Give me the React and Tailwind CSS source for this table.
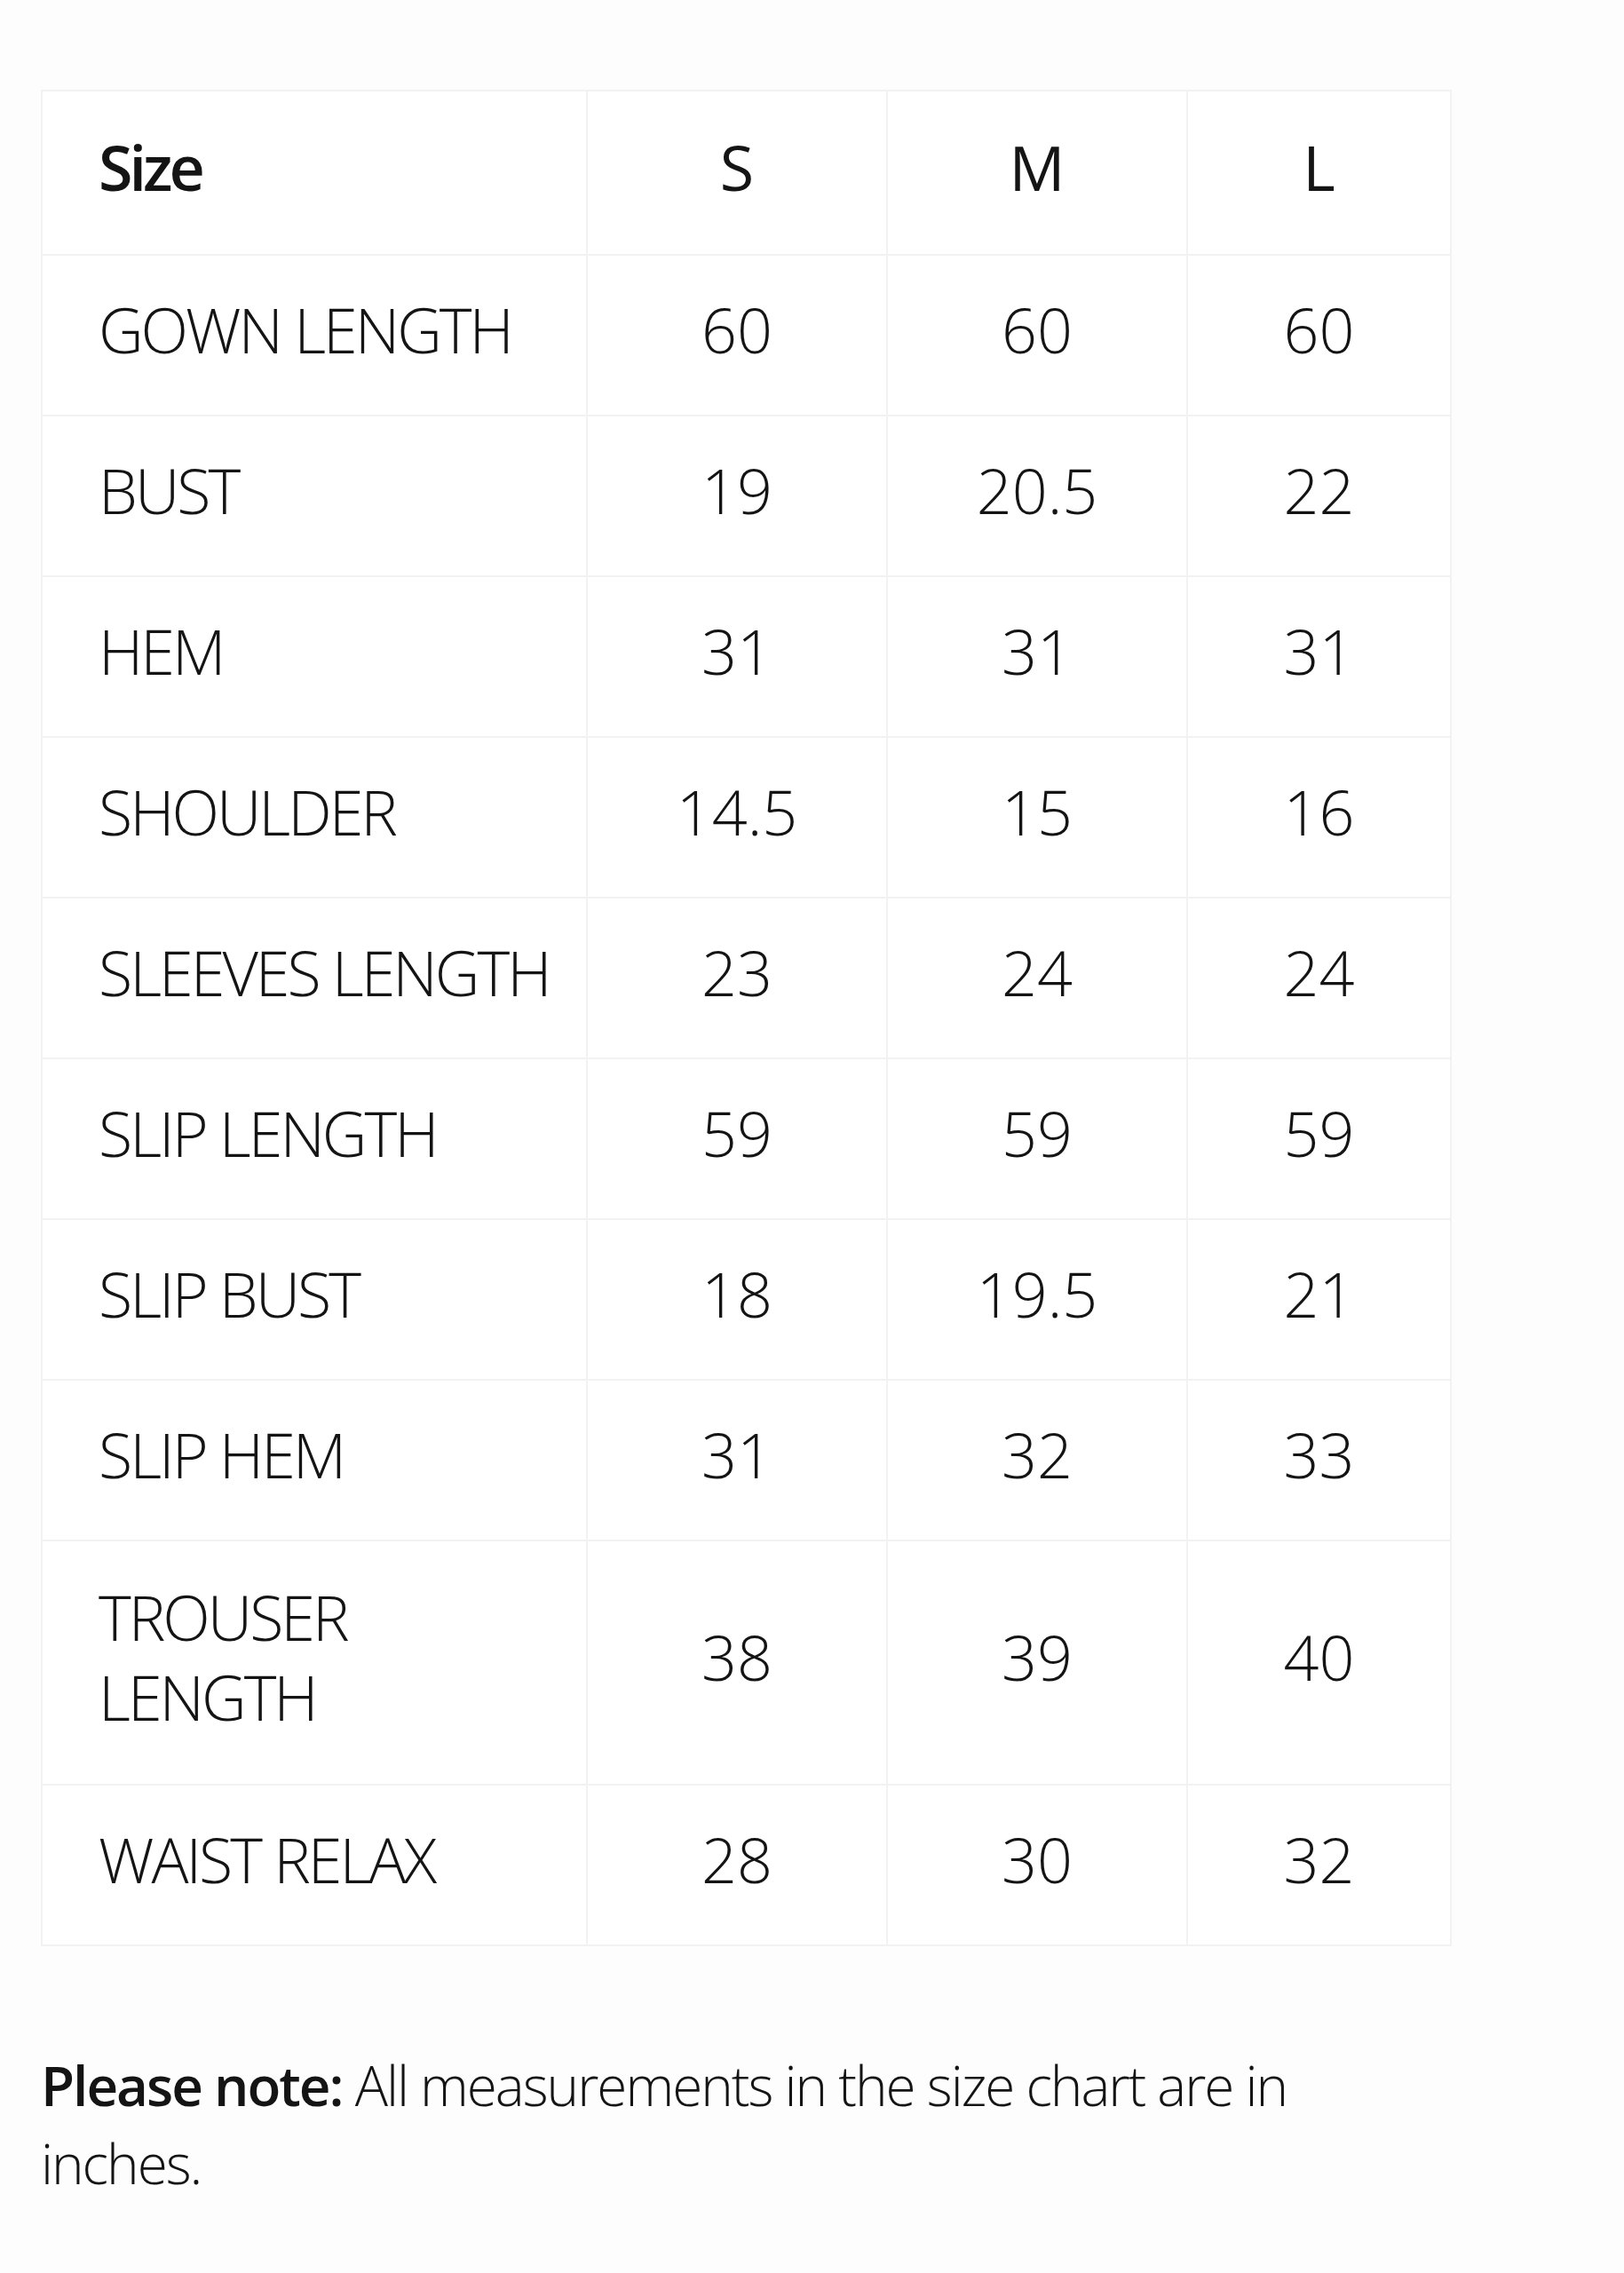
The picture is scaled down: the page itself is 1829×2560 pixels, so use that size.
import React from 'react'

const rows = [
  ['GOWN LENGTH', '60', '60', '60'],
  ['BUST', '19', '20.5', '22'],
  ['HEM', '31', '31', '31'],
  ['SHOULDER', '14.5', '15', '16'],
  ['SLEEVES LENGTH', '23', '24', '24'],
  ['SLIP LENGTH', '59', '59', '59'],
  ['SLIP BUST', '18', '19.5', '21'],
  ['SLIP HEM', '31', '32', '33'],
  ['TROUSER\nLENGTH', '38', '39', '40'],
  ['WAIST RELAX', '28', '30', '32'],
]

export default function App() {
  return (
    <div className="w-[1829px] min-h-[2560px] bg-[#fdfdfd] text-[#141414] font-['Open_Sans','Liberation_Sans',sans-serif] pt-[101px] pl-[46px]">
      {/* Size chart */}
      <table className="border-collapse table-fixed w-[1587px]">
        <colgroup>
          <col className="w-[614px]" />
          <col className="w-[338px]" />
          <col className="w-[338px]" />
          <col className="w-[297px]" />
        </colgroup>
        <thead>
          <tr className="h-[185px]">
            <th className="border-2 border-[#f2f2f2] bg-white text-left pl-[63px] pb-[14px] text-[70px] font-semibold leading-none tracking-[-4px]">Size</th>
            <th className="border-2 border-[#f2f2f2] bg-white text-center pb-[14px] text-[70px] font-normal leading-none">S</th>
            <th className="border-2 border-[#f2f2f2] bg-white text-center pb-[14px] text-[70px] font-normal leading-none">M</th>
            <th className="border-2 border-[#f2f2f2] bg-white text-center pb-[14px] text-[70px] font-normal leading-none">L</th>
          </tr>
        </thead>
        <tbody>
          {rows.map(([label, s, m, l]) => (
            <tr key={label} className={label.includes('\n') ? 'h-[275px]' : 'h-[181px]'}>
              <td className="border-2 border-[#f2f2f2] bg-white text-left pl-[63px] pb-[14px] text-[70px] font-light leading-[90px] whitespace-pre tracking-[-3px]">{label}</td>
              <td className="border-2 border-[#f2f2f2] bg-white text-center pb-[14px] text-[70px] font-light leading-none">{s}</td>
              <td className="border-2 border-[#f2f2f2] bg-white text-center pb-[14px] text-[70px] font-light leading-none">{m}</td>
              <td className="border-2 border-[#f2f2f2] bg-white text-center pb-[14px] text-[70px] font-light leading-none">{l}</td>
            </tr>
          ))}
        </tbody>
      </table>

      {/* Note */}
      <p className="mt-[112px] text-[62px] font-light leading-[88px] whitespace-nowrap tracking-[-2px]">
        <span className="font-semibold">Please note:</span> All measurements in the size chart are in
        <br />
        inches.
      </p>
    </div>
  )
}
